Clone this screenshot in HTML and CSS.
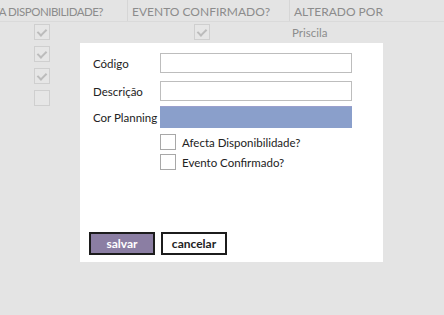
FILE: index.html
```html
<!DOCTYPE html>
<html lang="pt">
  <head>
    <meta charset="UTF-8" />
    <title>Tipos de Evento</title>
    <link rel="stylesheet" href="styles.css">
  </head>
  <body>
    <div class="grid">
      <div class="row head">
        <div class="cell first"><span>AFECTA DISPONIBILIDADE?</span></div>
        <div class="cell">EVENTO CONFIRMADO?</div>
        <div class="cell">ALTERADO POR</div>
      </div>
      <div class="row">
        <div class="cell first"><span class="box checked"></span></div>
        <div class="cell"><span class="box checked mid"></span></div>
        <div class="cell name">Priscila</div>
      </div>
      <div class="row">
        <div class="cell first"><span class="box checked"></span></div>
        <div class="cell"></div>
        <div class="cell"></div>
      </div>
      <div class="row">
        <div class="cell first"><span class="box checked"></span></div>
        <div class="cell"></div>
        <div class="cell"></div>
      </div>
      <div class="row">
        <div class="cell first"><span class="box"></span></div>
        <div class="cell"></div>
        <div class="cell"></div>
      </div>
    </div>

    <div class="modal">
      <form class="fields">
        <label for="codigo">Código</label>
        <input type="text" id="codigo" />
        <label for="descricao" class="gap-desc">Descrição</label>
        <input type="text" id="descricao" class="gap-desc" />
        <label class="gap-color">Cor Planning</label>
        <div class="color gap-color"></div>
        <div class="check first-check">
          <span class="tick"></span>
          Afecta Disponibilidade?
        </div>
        <div class="check">
          <span class="tick"></span>
          Evento Confirmado?
        </div>
      </form>
      <div class="actions">
        <button class="save">salvar</button>
        <button class="cancel">cancelar</button>
      </div>
    </div>
  </body>
</html>
```

FILE: styles.css
```css
body {
  margin: 0;
  height: 315px;
  background: #e4e4e4;
  font-family: Lato, "Open Sans", sans-serif;
  overflow: hidden;
}

.row {
  display: grid;
  grid-template-columns: 127px 162px 1fr;
  height: 22px;
}

.row.head {
  height: 21px;
  border-bottom: 1px solid #dadada;
}

.cell {
  font-size: 11.5px;
  color: #8c8c8c;
  padding-left: 3px;
  display: flex;
  align-items: center;
  white-space: nowrap;
  overflow: hidden;
}

.head .cell {
  font-size: 12px;
  border-left: 1px solid #d6d6d6;
  padding-left: 4px;
  padding-top: 1px;
}

.head .cell.first {
  border-left: none;
  justify-content: flex-end;
  padding-right: 24px;
  font-size: 11.5px;
  letter-spacing: -0.5px;
}

.cell.first {
  padding-left: 34px;
}

.cell.name {
  padding-left: 3px;
  padding-bottom: 2px;
}

.box {
  width: 14px;
  height: 14px;
  border: 1px solid #cfcfcf;
  background: #e6e6e6;
  position: relative;
  margin-top: -3px;
}

.box.mid {
  margin-left: 64px;
}

.box.checked::after {
  content: "";
  position: absolute;
  left: 4px;
  top: 2px;
  width: 4px;
  height: 7px;
  border-right: 2px solid #bcbcbc;
  border-bottom: 2px solid #bcbcbc;
  transform: rotate(45deg);
}

.modal {
  position: absolute;
  left: 80px;
  top: 43px;
  width: 303px;
  height: 219px;
  background: #fff;
  display: flex;
  flex-direction: column;
  box-sizing: border-box;
  padding: 10px 0 7px 13px;
}

.fields {
  display: grid;
  grid-template-columns: 67px 192px;
  align-items: center;
  font-size: 11.5px;
  color: #222;
}

.fields label {
  white-space: nowrap;
}

.gap-desc {
  margin-top: 8px;
}

.gap-color {
  margin-top: 5px;
}

input {
  height: 20px;
  box-sizing: border-box;
  border: 1px solid #bdbdbd;
  margin: 0;
  padding: 2px 4px;
}

.color {
  height: 22px;
  background: #8a9fcb;
  border-top: 1px solid #9aa0cd;
  box-sizing: border-box;
}

.check {
  grid-column: 2;
  display: flex;
  align-items: center;
  gap: 6px;
  font-size: 11.5px;
  margin-top: 4px;
}

.check.first-check {
  margin-top: 6px;
}

.tick {
  width: 16px;
  height: 16px;
  border: 1px solid #a8a8a8;
  box-sizing: border-box;
}

.actions {
  margin-top: auto;
  margin-left: -4px;
  display: flex;
  gap: 6px;
}

button {
  width: 66px;
  height: 23px;
  border: 2px solid #1c1c1c;
  font-family: Lato, "Open Sans", sans-serif;
  font-weight: bold;
  font-size: 12px;
  padding: 0;
  cursor: pointer;
}

.save {
  background: #8b7ea3;
  color: #fff;
}

.cancel {
  background: #fff;
  color: #222;
}
```
